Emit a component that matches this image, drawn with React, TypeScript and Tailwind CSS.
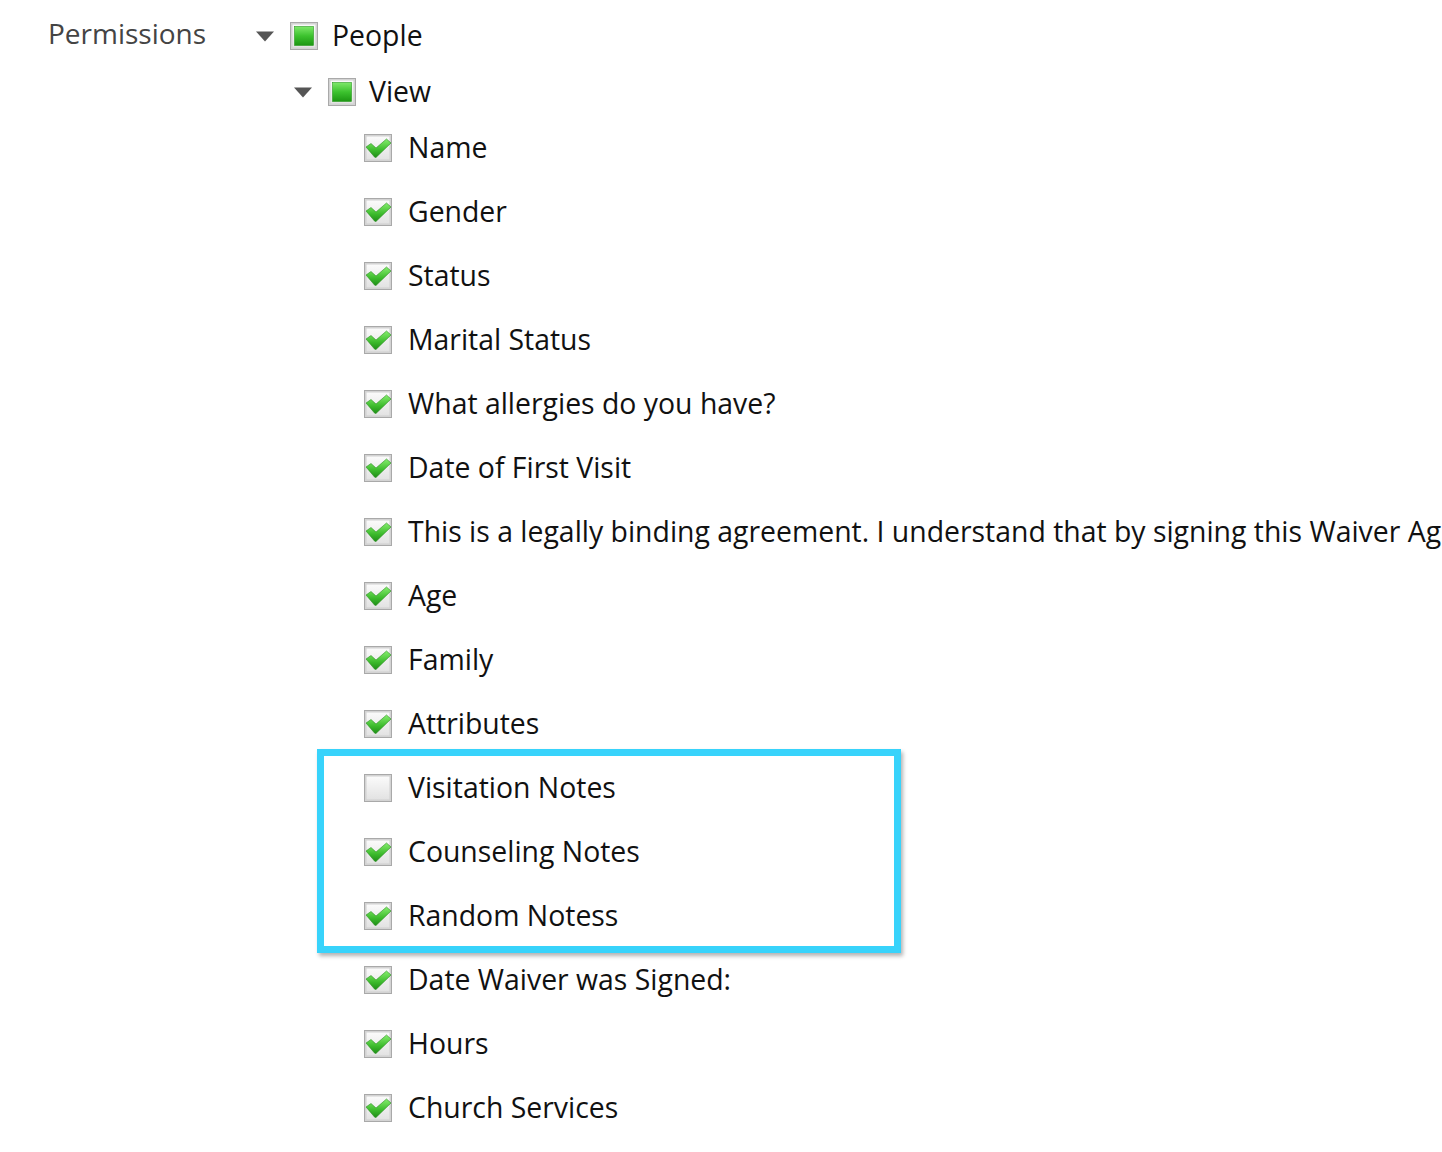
const font = { fontFamily: '"Open Sans", "Noto Sans", sans-serif' }

const leaves = [
  'Name',
  'Gender',
  'Status',
  'Marital Status',
  'What allergies do you have?',
  'Date of First Visit',
  'This is a legally binding agreement. I understand that by signing this Waiver Agreement I am releasing the church from any liability.',
  'Age',
  'Family',
  'Attributes',
]

const highlighted = [
  { label: 'Visitation Notes', checked: false },
  { label: 'Counseling Notes', checked: true },
  { label: 'Random Notess', checked: true },
]

const trailing = ['Date Waiver was Signed:', 'Hours', 'Church Services']

function Box({ state }: { state: 'checked' | 'partial' | 'empty' }) {
  return (
    <svg width="30" height="30" viewBox="0 0 30 30" className="shrink-0">
      <defs>
        <linearGradient id="boxFill" x1="0" y1="0" x2="0" y2="1">
          <stop offset="0" stopColor="#fbfbfb" />
          <stop offset="1" stopColor="#e2e2e2" />
        </linearGradient>
        <linearGradient id="greenFill" x1="0" y1="0" x2="0" y2="1">
          <stop offset="0" stopColor="#7ee86a" />
          <stop offset="0.5" stopColor="#3cc22e" />
          <stop offset="1" stopColor="#1c9612" />
        </linearGradient>
        <linearGradient id="checkFill" x1="0" y1="0" x2="0" y2="1">
          <stop offset="0" stopColor="#86ee6e" />
          <stop offset="0.6" stopColor="#3cba2c" />
          <stop offset="1" stopColor="#1f8e17" />
        </linearGradient>
      </defs>
      <rect x="1" y="1" width="28" height="28" fill="#d6d6d6" />
      <rect x="1.5" y="1.5" width="27" height="27" fill="none" stroke="#a9a9a9" strokeWidth="1" />
      <rect x="3" y="3" width="24" height="24" fill="url(#boxFill)" stroke="#cfcfcf" strokeWidth="1" />
      {state === 'partial' && (
        <rect x="5.5" y="5.5" width="19" height="19" fill="url(#greenFill)" stroke="#2a9a20" strokeWidth="0.6" />
      )}
      {state === 'checked' && (
        <path
          d="M3 14 L8 10.5 L13 15 L23.5 6 L28 10 L13.5 24 Q12.5 25 11.5 24 Z"
          fill="url(#checkFill)"
          stroke="#2c8f22"
          strokeWidth="0.6"
          strokeLinejoin="round"
        />
      )}
    </svg>
  )
}

function Caret() {
  return (
    <svg width="18" height="11" viewBox="0 0 18 11" className="shrink-0">
      <path d="M0 0.5 L18 0.5 L9 10.5 Z" fill="#555" />
    </svg>
  )
}

function Leaf({ label, checked = true }: { label: string; checked?: boolean }) {
  return (
    <div className="flex h-16 items-center gap-[15px]">
      <Box state={checked ? 'checked' : 'empty'} />
      <span className="whitespace-nowrap pb-0.5 text-[28.4px] text-[#111]">{label}</span>
    </div>
  )
}

export default function App() {
  return (
    <div className="h-[1152px] w-[1442px] overflow-hidden bg-white" style={font}>
      <div className="flex pt-2">
        <div className="flex h-14 w-[256px] shrink-0 items-center pb-[6px] pl-12 text-[28px] text-[#444]">
          Permissions
        </div>
        <div className="min-w-0 flex-1">
          <div className="flex h-14 items-center">
            <Caret />
            <div className="ml-[15px] mr-[13px]">
              <Box state="partial" />
            </div>
            <span className="pb-0.5 text-[28.4px] text-[#111]">People</span>
          </div>
          <div className="flex h-14 items-center pl-[38px]">
            <Caret />
            <div className="ml-[15px] mr-[12px]">
              <Box state="partial" />
            </div>
            <span className="pb-0.5 text-[28.4px] text-[#111]">View</span>
          </div>
          <div className="-mt-1 pl-[107px]">
            {leaves.map((l) => (
              <Leaf key={l} label={l} />
            ))}
            <div className="relative">
              {highlighted.map((h) => (
                <Leaf key={h.label} label={h.label} checked={h.checked} />
              ))}
              <div className="pointer-events-none absolute left-[-46px] top-[-7px] h-[204px] w-[584px] border-[7px] border-[#38d3fb] shadow-[2px_3px_4px_rgba(0,0,0,0.3)]" />
            </div>
            {trailing.map((l) => (
              <Leaf key={l} label={l} />
            ))}
          </div>
        </div>
      </div>
    </div>
  )
}
